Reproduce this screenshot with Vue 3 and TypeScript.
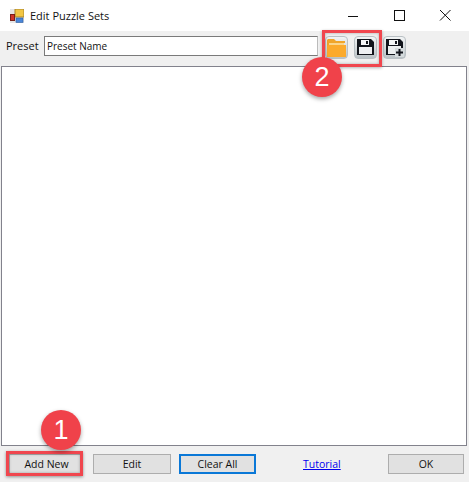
<script setup lang="ts">
const diskOuter = "M0 0h14l3 3v13H0z";
</script>

<template>
  <div class="window">
    <header class="titlebar">
      <svg class="app-icon" width="14" height="14" viewBox="0 0 14 14">
        <rect x="0" y="0" width="14" height="14" fill="#e6e6e6" />
        <rect x="5" y="0" width="9" height="8" fill="#f2c644" stroke="#a8842c" />
        <rect x="0.500" y="5.500" width="4" height="6" fill="#d0342a" stroke="#7a2018" />
        <rect x="6" y="9" width="7" height="4.500" fill="#4a86d8" stroke="#2d5c9e" stroke-width="0.600" />
      </svg>
      <span class="title">Edit Puzzle Sets</span>
      <div class="controls">
        <svg width="46" height="31" viewBox="0 0 46 31"><path d="M18 16.500h10" stroke="#111" fill="none" /></svg>
        <svg width="46" height="31" viewBox="0 0 46 31"><rect x="18.500" y="10.500" width="10" height="10" stroke="#111" fill="none" /></svg>
        <svg width="46" height="31" viewBox="0 0 46 31"><path d="M18 10l10.500 10.500M28.500 10L18 20.500" stroke="#111" fill="none" /></svg>
      </div>
    </header>

    <div class="toolbar">
      <label class="preset-label">Preset</label>
      <input class="preset-input" value="Preset Name" />
      <div class="tools">
        <button class="tool">
          <svg width="19" height="18" viewBox="0 0 19 18">
            <path d="M0 18V1l1-1h6l2 2h9v2H3v1z" fill="#f0a52a" />
            <path d="M2 4h15v2H2z" fill="#fbd58a" />
            <path d="M0 18V7l1-1h18v12z" fill="#fbaa2c" />
          </svg>
        </button>
        <button class="tool">
          <svg width="17" height="17" viewBox="0 0 17 17">
            <path :d="diskOuter" fill="#12151c" />
            <path d="M4 1h8v5H4z" fill="#f4f6f7" />
            <path d="M9 2h2v3H9z" fill="#12151c" />
            <path d="M2 8h13v7H2z" fill="#eef0f2" />
          </svg>
        </button>
        <button class="tool">
          <svg width="18" height="18" viewBox="0 0 18 18">
            <path :d="diskOuter" fill="#12151c" />
            <path d="M3 1h9v5H3z" fill="#f4f6f7" />
            <path d="M9 2h2v3H9z" fill="#12151c" />
            <path d="M2 7h13v8H2z" fill="#eceff0" />
            <path d="M9 9h9v9H9z" fill="#d5dbdd" />
            <path d="M13.500 10v7M10 13.500h7" stroke="#12151c" stroke-width="2" />
          </svg>
        </button>
      </div>
    </div>

    <main class="list"></main>

    <footer class="actions">
      <button class="btn add">Add New</button>
      <button class="btn edit">Edit</button>
      <button class="btn clear">Clear All</button>
      <a class="link">Tutorial</a>
      <button class="btn ok">OK</button>
    </footer>

    <div class="highlight top"></div>
    <div class="highlight bottom"></div>
    <div class="badge badge-two">2</div>
    <div class="badge badge-one">1</div>
  </div>
</template>

<style scoped>
.window {
  position: relative;
  width: 469px;
  height: 482px;
  overflow: hidden;
  background: #f0f0f0;
  font-family: "Open Sans", "Liberation Sans", sans-serif;
  font-size: 11px;
  color: #111;
}
.titlebar {
  height: 31px;
  background: #fff;
  display: flex;
  align-items: center;
  padding-left: 10px;
}
.app-icon { margin-right: 6px; }
.controls { margin-left: auto; margin-right: 1px; display: flex; }
.controls svg { display: block; }
.toolbar {
  height: 35px;
  box-sizing: border-box;
  display: flex;
  align-items: flex-start;
  padding: 5px 0 0 6px;
}
.preset-label { width: 38px; line-height: 20px; }
.preset-input {
  width: 274px;
  height: 20px;
  box-sizing: border-box;
  border: 1px solid #7a7a7a;
  border-right-color: #bbb;
  padding: 0 2px;
  font: inherit;
  font-size: 10px;
  color: #111;
  background: #fff;
  outline: none;
}
.tools {
  display: flex;
  gap: 6px;
  margin-left: 7px;
}
.tool {
  width: 23px;
  height: 23px;
  padding: 0;
  border: 1px solid #b9c0c4;
  border-radius: 4px;
  background: linear-gradient(#f2f4f5, #bac2c6);
  display: flex;
  align-items: center;
  justify-content: center;
}
.list {
  margin-left: 1px;
  width: 466px;
  height: 380px;
  box-sizing: border-box;
  background: #fff;
  border: 1px solid #82828c;
}
.actions {
  display: flex;
  align-items: center;
  height: 20px;
  margin-top: 8px;
  padding-left: 9px;
  font-size: 10.500px;
}
.btn {
  height: 20px;
  padding: 0;
  box-sizing: border-box;
  background: #e1e1e1;
  border: 1px solid #adadad;
  font: inherit;
  color: #111;
}
.add { width: 72px; padding-left: 3px; }
.edit { width: 78px; margin-left: 12px; }
.clear { width: 77px; margin-left: 8px; border: 2px solid #0a78d7; }
.link {
  margin-left: 47px;
  color: #0000ee;
  text-decoration: underline;
}
.ok { width: 76px; margin-left: auto; margin-right: 5px; }
.highlight {
  position: absolute;
  box-sizing: border-box;
  border: 3px solid #f0464e;
}
.highlight.top {
  left: 322px;
  top: 30px;
  width: 60px;
  height: 37px;
  box-shadow: 0 1px 3px rgba(0, 0, 0, 0.3), inset 0 0 3px rgba(0, 0, 0, 0.3);
}
.highlight.bottom {
  left: 6px;
  top: 451px;
  width: 77px;
  height: 25px;
  box-shadow: 0 1px 3px rgba(0, 0, 0, 0.4), inset 0 0 3px rgba(0, 0, 0, 0.3);
}
.badge {
  position: absolute;
  width: 40px;
  height: 40px;
  border-radius: 50%;
  background: #f0424a;
  color: #fff;
  font-family: "Liberation Sans", sans-serif;
  font-size: 27px;
  line-height: 40px;
  text-align: center;
  box-shadow: 0 2px 4px rgba(0, 0, 0, 0.35);
}
.badge-two { left: 302px; top: 57px; }
.badge-one { left: 41px; top: 410px; }
</style>
